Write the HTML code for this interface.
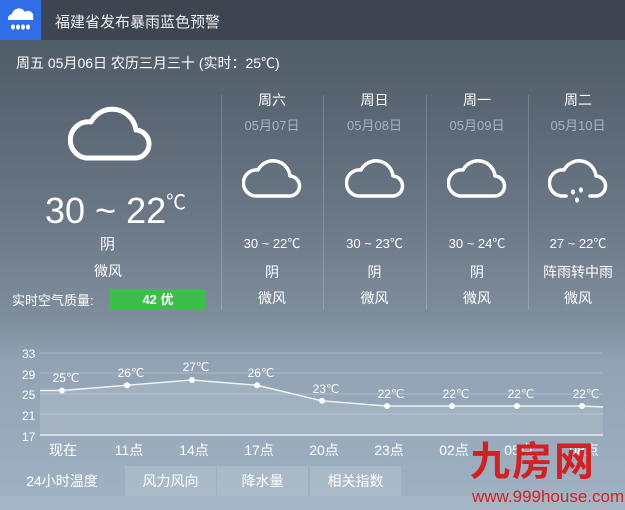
<!DOCTYPE html>
<html><head><meta charset="utf-8"><style>
*{margin:0;padding:0;box-sizing:border-box}
body{width:625px;height:510px;overflow:hidden;font-family:"Liberation Sans","Noto Sans CJK SC",sans-serif;color:#fff;position:relative;
background:linear-gradient(to bottom,#4d5865 0px,#56616e 80px,#6b7887 220px,#7f8e9d 320px,#90a2b3 360px,#a0b3c4 510px)}
.hdr{position:absolute;left:0;top:0;width:625px;height:40px;background:#3d4550}
.ico{position:absolute;left:0;top:0;width:41px;height:40px;background:#2f6ee6}
.t{position:absolute;white-space:nowrap;text-align:center}
.div{position:absolute;top:95px;width:1px;height:215px;background:rgba(255,255,255,.18)}
.tab{position:absolute;top:466px;height:30px;line-height:30px;text-align:center;font-size:14px;background:rgba(255,255,255,.13)}
.c{position:absolute;top:90px;text-align:center}
.c .tp{font-size:13px;margin-top:29px}.c .w{font-size:14px;margin-top:10px}.c .f{font-size:14px;margin-top:6px}
</style></head><body>
<div class="hdr"></div>
<div class="ico"><svg width="41" height="40" viewBox="0 0 41 40"><path d="M8 20 a5 5 0 0 1 4-6 a7 7 0 0 1 13-2 a5 5 0 0 1 8 5 a3 3 0 0 1 0 3z" fill="#fff"/><g fill="#fff"><ellipse cx="13" cy="27" rx="2" ry="2.6"/><ellipse cx="18" cy="27" rx="2" ry="2.6"/><ellipse cx="23" cy="27" rx="2" ry="2.6"/><ellipse cx="28" cy="27" rx="2" ry="2.6"/></g></svg></div>
<div class="t" style="left:55px;top:11px;font-size:15px;color:#eee">福建省发布暴雨蓝色预警</div>
<div class="t" style="left:16px;top:53px;font-size:14px">周五 05月06日 农历三月三十 (实时：25℃)</div>

<svg style="position:absolute;left:68px;top:104px" width="84" height="58" viewBox="0 0 84 58"><path d="M18 54 H66 a14 14 0 0 0 2-28 a24 24 0 0 0-45-8 a17 17 0 0 0-5 36z" fill="none" stroke="#fff" stroke-width="5" stroke-linejoin="round"/></svg>
<div class="t" style="left:45px;top:186px;font-size:36px">30 ~ 22<span style="font-size:20px;vertical-align:14px">℃</span></div>
<div class="t" style="left:100px;top:233px;font-size:15px">阴</div>
<div class="t" style="left:94px;top:261px;font-size:14px">微风</div>
<div class="t" style="left:12px;top:290px;font-size:13px">实时空气质量:</div>
<div class="t" style="left:110px;top:289px;width:96px;height:21px;line-height:21px;background:#3dbe4a;font-size:13px;font-weight:bold">42 优</div>

<div class="div" style="left:221px"></div><div class="div" style="left:323px"></div><div class="div" style="left:426px"></div><div class="div" style="left:528px"></div>

<div class="c" style="left:221px;width:102px">
<div style="font-size:14px">周六</div><div style="font-size:13px;color:#a9b4c0;margin-top:5px">05月07日</div>
<svg style="margin-top:25px" width="60" height="40" viewBox="0 0 60 40"><path d="M13 37 H47 a10 10 0 0 0 1-20 a17 17 0 0 0-32-6 a12 12 0 0 0-3 26z" fill="none" stroke="#fff" stroke-width="3.5" stroke-linejoin="round"/></svg>
<div class="tp">30 ~ 22℃</div><div class="w">阴</div><div class="f">微风</div></div>

<div class="c" style="left:323px;width:103px">
<div style="font-size:14px">周日</div><div style="font-size:13px;color:#a9b4c0;margin-top:5px">05月08日</div>
<svg style="margin-top:25px" width="60" height="40" viewBox="0 0 60 40"><path d="M13 37 H47 a10 10 0 0 0 1-20 a17 17 0 0 0-32-6 a12 12 0 0 0-3 26z" fill="none" stroke="#fff" stroke-width="3.5" stroke-linejoin="round"/></svg>
<div class="tp">30 ~ 23℃</div><div class="w">阴</div><div class="f">微风</div></div>

<div class="c" style="left:426px;width:102px">
<div style="font-size:14px">周一</div><div style="font-size:13px;color:#a9b4c0;margin-top:5px">05月09日</div>
<svg style="margin-top:25px" width="60" height="40" viewBox="0 0 60 40"><path d="M13 37 H47 a10 10 0 0 0 1-20 a17 17 0 0 0-32-6 a12 12 0 0 0-3 26z" fill="none" stroke="#fff" stroke-width="3.5" stroke-linejoin="round"/></svg>
<div class="tp">30 ~ 24℃</div><div class="w">阴</div><div class="f">微风</div></div>

<div class="c" style="left:528px;width:100px">
<div style="font-size:14px">周二</div><div style="font-size:13px;color:#a9b4c0;margin-top:5px">05月10日</div>
<svg style="margin-top:25px" width="60" height="46" viewBox="0 0 60 46"><path d="M18 37 H13 a12 12 0 0 1 3-26 a17 17 0 0 1 32 6 a10 10 0 0 1-1 20 H42" fill="none" stroke="#fff" stroke-width="3.5" stroke-linecap="round" stroke-linejoin="round"/><g fill="#fff"><ellipse cx="25" cy="33" rx="2" ry="2.6"/><ellipse cx="33" cy="31" rx="2" ry="2.6"/><ellipse cx="29" cy="41" rx="2" ry="2.6"/></g></svg>
<div class="tp" style="margin-top:23px">27 ~ 22℃</div><div class="w">阵雨转中雨</div><div class="f">微风</div></div>

<svg style="position:absolute;left:0;top:340px" width="625" height="125" viewBox="0 340 625 125" font-family="Liberation Sans" font-size="12" fill="#fff">
<polygon points="40,390.5 62,390.5 127,385.3 192,380 257,385.3 322,400.9 387,406 452,406 517,406 582,406 603,407 603,436 40,436" fill="rgba(255,255,255,.12)"/>
<g stroke="rgba(255,255,255,.25)" stroke-width="1"><line x1="40" y1="353" x2="603" y2="353"/><line x1="40" y1="373" x2="603" y2="373"/><line x1="40" y1="394" x2="603" y2="394"/><line x1="40" y1="414" x2="603" y2="414"/></g>
<line x1="40" y1="435" x2="603" y2="435" stroke="rgba(255,255,255,.7)" stroke-width="1.5"/>
<g font-size="12"><text x="22" y="358">33</text><text x="22" y="379">29</text><text x="22" y="399">25</text><text x="22" y="420">21</text><text x="22" y="441">17</text></g>
<polyline points="40,390.5 62,390.5 127,385.3 192,380 257,385.3 322,400.9 387,406 452,406 517,406 582,406 603,407" fill="none" stroke="#eef2f5" stroke-width="1.5"/>
<g fill="#fff"><circle cx="62" cy="390.5" r="3"/><circle cx="127" cy="385.3" r="3"/><circle cx="192" cy="380" r="3"/><circle cx="257" cy="385.3" r="3"/><circle cx="322" cy="400.9" r="3"/><circle cx="387" cy="406" r="3"/><circle cx="452" cy="406" r="3"/><circle cx="517" cy="406" r="3"/><circle cx="582" cy="406" r="3"/></g>
<g text-anchor="middle"><text x="66" y="382">25℃</text><text x="131" y="377">26℃</text><text x="196" y="371">27℃</text><text x="261" y="377">26℃</text><text x="326" y="393">23℃</text><text x="391" y="398">22℃</text><text x="456" y="398">22℃</text><text x="521" y="398">22℃</text><text x="586" y="398">22℃</text></g>
<g text-anchor="middle" font-size="14" font-family="Liberation Sans,Noto Sans CJK SC,sans-serif"><text x="63" y="455">现在</text><text x="129" y="455">11点</text><text x="194" y="455">14点</text><text x="259" y="455">17点</text><text x="324" y="455">20点</text><text x="389" y="455">23点</text><text x="454" y="455">02点</text><text x="519" y="455">05点</text><text x="584" y="455">08点</text></g>
</svg>
<div class="tab" style="left:0;width:124px;background:transparent">24小时温度</div>
<div class="tab" style="left:125px;width:91px">风力风向</div>
<div class="tab" style="left:217px;width:91px">降水量</div>
<div class="tab" style="left:310px;width:91px">相关指数</div>
<div style="position:absolute;left:0;top:496px;width:625px;height:14px;background:rgba(255,255,255,.06)"></div>
<div class="t" style="left:470px;top:440px;font-size:40px;color:#d42020;font-weight:bold;letter-spacing:2px;line-height:44px">九房网</div>
<div class="t" style="left:472px;top:487px;font-size:17px;color:#d42020;line-height:20px">www.999house.com</div>
</body></html>
